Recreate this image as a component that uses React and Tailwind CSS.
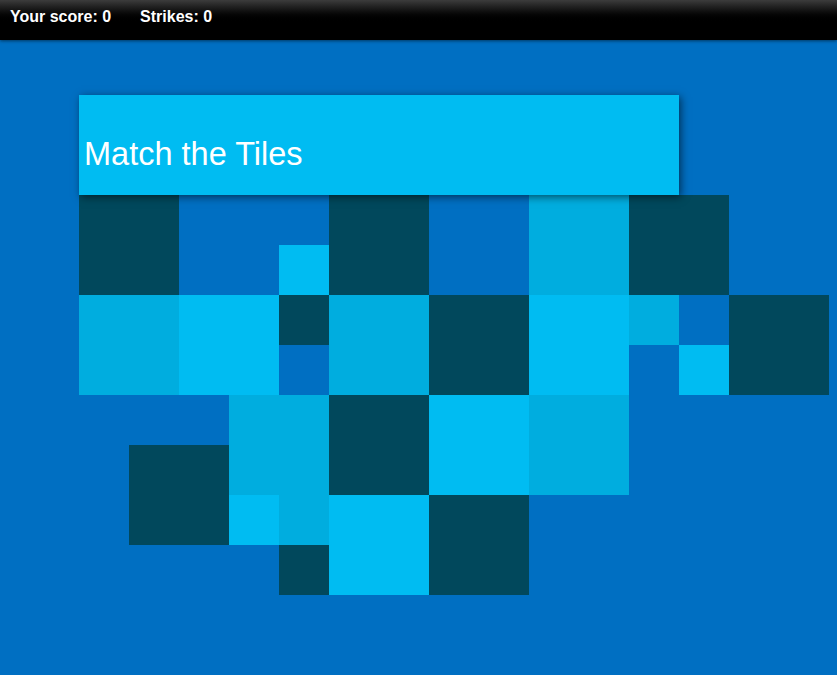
const DARK = "bg-[#01485c]";
const MID = "bg-[#00addf]";
const LIGHT = "bg-[#00bcf2]";

// tiles placed on a 50px grid; col/row are 1-based grid lines
const tiles = [
  { c: "col-start-1 col-span-2 row-start-3 row-span-2", k: DARK },
  { c: "col-start-5 row-start-4", k: LIGHT },
  { c: "col-start-6 col-span-2 row-start-3 row-span-2", k: DARK },
  { c: "col-start-10 col-span-2 row-start-3 row-span-2", k: MID },
  { c: "col-start-12 col-span-2 row-start-3 row-span-2", k: DARK },

  { c: "col-start-1 col-span-2 row-start-5 row-span-2", k: MID },
  { c: "col-start-3 col-span-2 row-start-5 row-span-2", k: LIGHT },
  { c: "col-start-5 row-start-5", k: DARK },
  { c: "col-start-6 col-span-2 row-start-5 row-span-2", k: MID },
  { c: "col-start-8 col-span-2 row-start-5 row-span-2", k: DARK },
  { c: "col-start-10 col-span-2 row-start-5 row-span-2", k: LIGHT },
  { c: "col-start-12 row-start-5", k: MID },
  { c: "col-start-13 row-start-6", k: LIGHT },
  { c: "col-start-14 col-span-2 row-start-5 row-span-2", k: DARK },

  { c: "col-start-2 col-span-2 row-start-8 row-span-2", k: DARK },
  { c: "col-start-4 col-span-2 row-start-7 row-span-2", k: MID },
  { c: "col-start-4 row-start-9", k: LIGHT },
  { c: "col-start-5 row-start-9", k: MID },
  { c: "col-start-5 row-start-10", k: DARK },
  { c: "col-start-6 col-span-2 row-start-7 row-span-2", k: DARK },
  { c: "col-start-8 col-span-2 row-start-7 row-span-2", k: LIGHT },
  { c: "col-start-10 col-span-2 row-start-7 row-span-2", k: MID },
  { c: "col-start-6 col-span-2 row-start-9 row-span-2", k: LIGHT },
  { c: "col-start-8 col-span-2 row-start-9 row-span-2", k: DARK },
];

export default function App() {
  return (
    <div
      className="h-[675px] w-full overflow-hidden bg-[#006fc2]"
      style={{ fontFamily: '"Liberation Sans", Arial, sans-serif' }}
    >
      {/* score bar */}
      <div className="relative z-20 flex h-10 gap-[29px] bg-linear-to-b from-[#3c3c3c] via-black via-55% to-black pl-[10px] pt-[7px] text-base leading-5 font-bold text-white shadow-[0_1px_3px_rgba(0,0,0,0.5)]">
        <span>Your score: 0</span>
        <span>Strikes: 0</span>
      </div>

      {/* board */}
      <div className="ml-[79px] mt-[55px] grid grid-cols-[repeat(15,50px)] grid-rows-[repeat(10,50px)]">
        <div className="relative z-10 col-start-1 col-span-12 row-start-1 row-span-2 bg-[#00bcf2] pl-[5px] pt-[41px] shadow-[2px_2px_8px_rgba(0,0,0,0.55)]">
          <h1 className="text-[32.5px] leading-9 font-normal text-white">
            Match the Tiles
          </h1>
        </div>
        {tiles.map((t, i) => (
          <div key={i} className={`${t.c} ${t.k}`} />
        ))}
      </div>
    </div>
  );
}
